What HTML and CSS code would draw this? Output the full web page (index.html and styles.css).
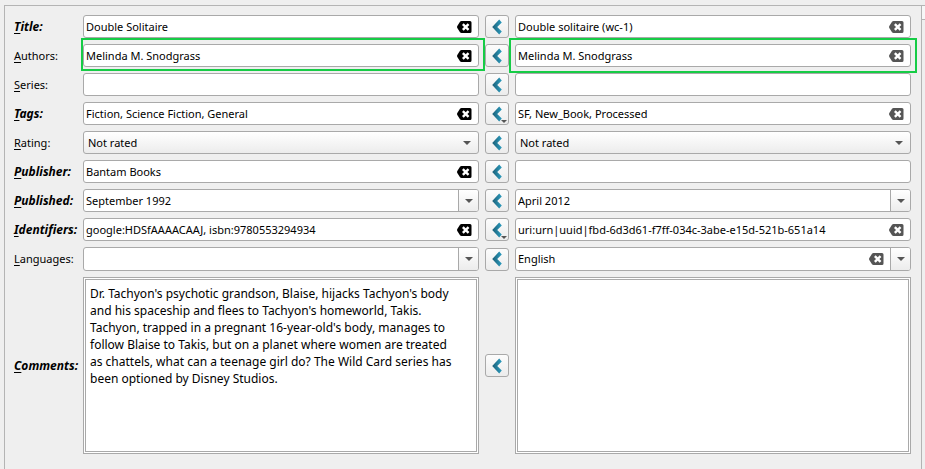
FILE: index.html
```html
<!DOCTYPE html>
<html lang="en">
<head>
<meta charset="utf-8">
<title>Compare metadata</title>
<link rel="stylesheet" href="styles.css">
</head>
<body>
<svg class="defs" aria-hidden="true">
  <defs>
    <linearGradient id="teal" x1="0" x2="1" y1="0" y2="0"><stop offset="0" stop-color="#1c5f77"/><stop offset="1" stop-color="#2b9cbf"/></linearGradient>
    <symbol id="left" viewBox="0 0 10 16"><path d="M9.800 3.400 7.200 .6 .2 8l7 7.400 2.600-2.800L5.200 8z" fill="url(#teal)"/></symbol>
    <symbol id="clear" viewBox="0 0 15 12"><path fill-rule="evenodd" d="M4.500 0H13q1.500 0 1.500 1.500v9Q14.500 12 13 12H4.500Q3.600 12 3 11.200L.3 7Q-.2 6 .3 5L3 .8Q3.600 0 4.500 0zM5 4l2 2-2 2 1.700 1.700 2-2 2 2L12.400 8l-2-2 2-2-1.700-1.700-2 2-2-2z" fill="currentColor"/></symbol>
    <symbol id="down" viewBox="0 0 8 4"><path d="M0 0h8L4 4z" fill="#555"/></symbol>
  </defs>
</svg>
<main class="window">
<form class="panel">
  <label class="changed" for="title"><u>T</u>itle:</label>
  <div class="field"><input id="title" value="Double Solitaire"><button type="button" class="clear" aria-label="Clear"><svg><use href="#clear"/></svg></button></div>
  <button type="button" class="copy" aria-label="Copy title"><svg><use href="#left"/></svg></button>
  <div class="field old"><input aria-label="Old title" value="Double solitaire (wc-1)"><button type="button" class="clear" aria-label="Clear"><svg><use href="#clear"/></svg></button></div>

  <label for="authors"><u>A</u>uthors:</label>
  <div class="field mark"><input id="authors" value="Melinda M. Snodgrass"><button type="button" class="clear" aria-label="Clear"><svg><use href="#clear"/></svg></button></div>
  <button type="button" class="copy" aria-label="Copy authors"><svg><use href="#left"/></svg></button>
  <div class="field old mark"><input aria-label="Old authors" value="Melinda M. Snodgrass"><button type="button" class="clear" aria-label="Clear"><svg><use href="#clear"/></svg></button></div>

  <label for="series"><u>S</u>eries:</label>
  <div class="field"><input id="series"></div>
  <button type="button" class="copy" aria-label="Copy series"><svg><use href="#left"/></svg></button>
  <div class="field old"><input aria-label="Old series"></div>

  <label class="changed" for="tags"><u>T</u>ags:</label>
  <div class="field"><input id="tags" value="Fiction, Science Fiction, General"><button type="button" class="clear" aria-label="Clear"><svg><use href="#clear"/></svg></button></div>
  <button type="button" class="copy" aria-label="Copy tags"><svg><use href="#left"/></svg><svg class="more"><use href="#down"/></svg></button>
  <div class="field old"><input aria-label="Old tags" value="SF, New_Book, Processed"><button type="button" class="clear" aria-label="Clear"><svg><use href="#clear"/></svg></button></div>

  <label for="rating"><u>R</u>ating:</label>
  <div class="field combo"><select id="rating"><option>Not rated</option></select><svg class="arrow"><use href="#down"/></svg></div>
  <button type="button" class="copy" aria-label="Copy rating"><svg><use href="#left"/></svg></button>
  <div class="field combo"><select aria-label="Old rating"><option>Not rated</option></select><svg class="arrow"><use href="#down"/></svg></div>

  <label class="changed" for="publisher"><u>P</u>ublisher:</label>
  <div class="field"><input id="publisher" value="Bantam Books"><button type="button" class="clear" aria-label="Clear"><svg><use href="#clear"/></svg></button></div>
  <button type="button" class="copy" aria-label="Copy publisher"><svg><use href="#left"/></svg></button>
  <div class="field old"><input aria-label="Old publisher"></div>

  <label class="changed" for="published"><u>P</u>ublished:</label>
  <div class="field"><input id="published" value="September 1992"><button type="button" class="drop" aria-label="Open calendar"><svg><use href="#down"/></svg></button></div>
  <button type="button" class="copy" aria-label="Copy published"><svg><use href="#left"/></svg></button>
  <div class="field old"><input aria-label="Old published" value="April 2012"><button type="button" class="drop" aria-label="Open calendar"><svg><use href="#down"/></svg></button></div>

  <label class="changed" for="identifiers"><u>I</u>dentifiers:</label>
  <div class="field"><input id="identifiers" value="google:HDSfAAAACAAJ, isbn:9780553294934"><button type="button" class="clear" aria-label="Clear"><svg><use href="#clear"/></svg></button></div>
  <button type="button" class="copy" aria-label="Copy identifiers"><svg><use href="#left"/></svg><svg class="more"><use href="#down"/></svg></button>
  <div class="field old"><input aria-label="Old identifiers" value="uri:urn|uuid|fbd-6d3d61-f7ff-034c-3abe-e15d-521b-651a14"><button type="button" class="clear" aria-label="Clear"><svg><use href="#clear"/></svg></button></div>

  <label for="languages"><u>L</u>anguages:</label>
  <div class="field tall"><input id="languages"><button type="button" class="drop" aria-label="Choose language"><svg><use href="#down"/></svg></button></div>
  <button type="button" class="copy" aria-label="Copy languages"><svg><use href="#left"/></svg></button>
  <div class="field old tall"><input aria-label="Old languages" value="English"><button type="button" class="clear" aria-label="Clear"><svg><use href="#clear"/></svg></button><button type="button" class="drop" aria-label="Choose language"><svg><use href="#down"/></svg></button></div>

  <label class="changed" for="comments"><u>C</u>omments:</label>
  <textarea id="comments" spellcheck="false">Dr. Tachyon's psychotic grandson, Blaise, hijacks Tachyon's body and his spaceship and flees to Tachyon's homeworld, Takis. Tachyon, trapped in a pregnant 16-year-old's body, manages to follow Blaise to Takis, but on a planet where women are treated as chattels, what can a teenage girl do? The Wild Card series has been optioned by Disney Studios.</textarea>
  <button type="button" class="copy" aria-label="Copy comments"><svg><use href="#left"/></svg></button>
  <textarea aria-label="Old comments"></textarea>
</form>
<aside class="side"><div class="tab"></div></aside>
</main>
</body>
</html>
```
FILE: styles.css
```css
* { box-sizing: border-box; }
body {
  margin: 0;
  background: #efefef;
  color: #000;
  font: 11px/16px "Noto Sans", "Open Sans", sans-serif;
  overflow: hidden;
}
.defs { position: absolute; width: 0; height: 0; }
.window { display: flex; min-height: 100vh; padding: 5px 0 0 4px; }
.panel {
  flex: 1;
  display: grid;
  grid-template-columns: 63px 1fr 24px 1fr;
  grid-auto-rows: min-content;
  align-items: center;
  gap: 6px;
  padding: 9px 10px 9px 9px;
  border: 1px solid #b4b4b4;
  border-bottom: 0;
}
label { white-space: nowrap; }
.changed { font-size: 12px; font-weight: 700; font-style: italic; }
u { text-underline-offset: 2px; }
.field {
  position: relative;
  display: flex;
  align-items: stretch;
  min-width: 0;
  height: 23px;
  border: 1px solid #a9a9a9;
  border-radius: 3px;
  background: #fff;
}
.tall { height: 24px; }
input, select, textarea { font: inherit; color: inherit; border: 0; outline: 0; background: none; }
input { flex: 1; min-width: 0; padding: 0 2px; }
button { padding: 0; border: 0; background: none; color: inherit; }
svg { display: block; }
.clear { width: 28px; display: grid; place-items: center; }
.clear svg { width: 15px; height: 12px; }
.old .clear { color: #555; }
.combo { background: linear-gradient(#fff, #ececec); }
select { appearance: none; flex: 1; padding: 0 4px; }
.arrow { width: 8px; height: 4px; margin: auto 7px; }
.drop {
  width: 20px;
  display: grid;
  place-items: center;
  border-left: 1px solid #a9a9a9;
  border-radius: 0 2px 2px 0;
  background: linear-gradient(#fff, #ececec);
}
.drop svg { width: 8px; height: 4px; }
.copy {
  position: relative;
  display: grid;
  place-items: center;
  height: 23px;
  border: 1px solid #a9a9a9;
  border-radius: 3px;
  background: linear-gradient(#fcfcfc, #ececec);
}
.copy svg { width: 10px; height: 16px; }
.copy .more { position: absolute; right: 1px; bottom: 1px; width: 6px; height: 3px; }
textarea {
  display: block;
  width: 100%;
  height: 177px;
  padding: 5px 20px 5px 4px;
  border: 3px double #a9a9a9;
  background: #fff;
  font-size: 12px;
  line-height: 17px;
  resize: none;
}
.mark::after {
  content: "";
  position: absolute;
  inset: -7px -7px -5px -3px;
  border: 2px solid #16cc46;
  pointer-events: none;
}
.old.mark::after { inset: -7px -7px -7px -7px; }
.side { width: 3px; }
.tab { height: 15px; border: 1px solid #b4b4b4; border-width: 1px 0; background: #f7f7f7; }
```
